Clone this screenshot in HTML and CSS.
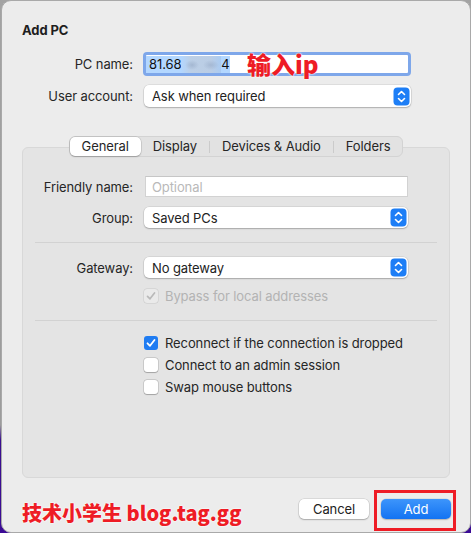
FILE: index.html
```html
<!DOCTYPE html>
<html>
<head>
<meta charset="utf-8">
<link rel="stylesheet" href="styles.css">
</head>
<body>
<div class="window">
  <div class="title">Add PC</div>
  <div class="form top">
    <label class="lbl">PC name:</label>
    <div class="field-wrap">
      <div class="input focus">
        <span class="sel">81.68<span class="blur"></span>4</span>
      </div>
      <span class="note-ip">输入ip</span>
    </div>
    <label class="lbl">User account:</label>
    <div class="popup">
      <span>Ask when required</span>
      <svg class="stepper" width="17" height="19" viewBox="0 0 17 19"><rect x="0.5" y="0.5" width="16" height="18" rx="4" fill="#1d7ef6"/><path d="M5.5 7.5 L8.5 4.5 L11.5 7.5 M5.5 11.5 L8.5 14.5 L11.5 11.5" fill="none" stroke="#fff" stroke-width="1.6" stroke-linecap="round" stroke-linejoin="round"/></svg>
    </div>
  </div>

  <div class="tabs-row">
    <div class="tabs">
      <div class="tab active">General</div>
      <div class="tab">Display</div>
      <div class="sep"></div>
      <div class="tab">Devices &amp; Audio</div>
      <div class="sep"></div>
      <div class="tab">Folders</div>
    </div>
  </div>

  <div class="panel">
    <div class="form inner">
      <label class="lbl">Friendly name:</label>
      <div class="input plain"><span class="ph">Optional</span></div>
      <label class="lbl">Group:</label>
      <div class="popup">
        <span>Saved PCs</span>
        <svg class="stepper" width="17" height="19" viewBox="0 0 17 19"><rect x="0.5" y="0.5" width="16" height="18" rx="4" fill="#1d7ef6"/><path d="M5.5 7.5 L8.5 4.5 L11.5 7.5 M5.5 11.5 L8.5 14.5 L11.5 11.5" fill="none" stroke="#fff" stroke-width="1.6" stroke-linecap="round" stroke-linejoin="round"/></svg>
      </div>
    </div>
    <div class="divider d1"></div>
    <div class="form inner g2">
      <label class="lbl">Gateway:</label>
      <div class="popup">
        <span>No gateway</span>
        <svg class="stepper" width="17" height="19" viewBox="0 0 17 19"><rect x="0.5" y="0.5" width="16" height="18" rx="4" fill="#1d7ef6"/><path d="M5.5 7.5 L8.5 4.5 L11.5 7.5 M5.5 11.5 L8.5 14.5 L11.5 11.5" fill="none" stroke="#fff" stroke-width="1.6" stroke-linecap="round" stroke-linejoin="round"/></svg>
      </div>
      <div></div>
      <div class="check disabled">
        <span class="box"><svg width="14" height="14" viewBox="0 0 14 14"><path d="M3.5 7.3 L6 9.8 L10.5 4" fill="none" stroke="#b9b9b9" stroke-width="1.7" stroke-linecap="round" stroke-linejoin="round"/></svg></span>
        <span>Bypass for local addresses</span>
      </div>
    </div>
    <div class="divider d2"></div>
    <div class="form inner g3">
      <div></div>
      <div class="checks">
        <div class="check">
          <span class="box on"><svg width="14" height="14" viewBox="0 0 14 14"><path d="M3.5 7.3 L6 9.8 L10.5 4" fill="none" stroke="#fff" stroke-width="1.8" stroke-linecap="round" stroke-linejoin="round"/></svg></span>
          <span>Reconnect if the connection is dropped</span>
        </div>
        <div class="check">
          <span class="box"></span>
          <span>Connect to an admin session</span>
        </div>
        <div class="check">
          <span class="box"></span>
          <span>Swap mouse buttons</span>
        </div>
      </div>
    </div>
  </div>

  <div class="footer">
    <div class="note-blog">技术小学生 blog.tag.gg</div>
    <div class="buttons">
      <button class="btn">Cancel</button>
      <button class="btn primary">Add</button>
    </div>
  </div>
</div>
</body>
</html>
```
FILE: styles.css
```css
* { box-sizing: border-box; }
html, body { margin: 0; padding: 0; }
body {
  width: 471px;
  height: 533px;
  overflow: hidden;
  background: linear-gradient(to bottom, #a3a3a3 0, #9c9c9c 425px, #3a0f8f 440px, #3b0b95 533px);
  font-family: "Inter", "Liberation Sans", sans-serif;
  font-size: 13px;
  letter-spacing: -0.1px;
  color: #262626;
}
.window {
  margin-left: 1px;
  width: 470px;
  height: 533px;
  background: #ececec;
  border: 1px solid #a9a9a9;
  border-radius: 10px;
  padding: 0 20px;
}
.title {
  margin-top: 21px;
  font-weight: 700;
  line-height: 16px;
  color: #1e1e1e;
}
.form {
  display: grid;
  grid-template-columns: 111px 1fr;
  column-gap: 10px;
  align-items: center;
}
.form.top {
  margin-top: 14px;
  margin-right: 39px;
  row-gap: 9px;
}
.lbl {
  text-align: right;
  white-space: nowrap;
  line-height: 16px;
}
.field-wrap { position: relative; }
.input {
  height: 24px;
  background: #fff;
  display: flex;
  align-items: center;
}
.input.focus {
  border: 3px solid #7ea7ea;
  border-radius: 4px;
  padding-left: 0;
}
.sel {
  background: #b3d7ff;
  color: #111;
  line-height: 17px;
  display: inline-flex;
  align-items: center;
  padding-left: 3px;
}
.blur {
  display: inline-block;
  width: 40px;
  height: 17px;
  background:
    radial-gradient(ellipse 7px 5px at 11px 9px, rgba(140,160,190,0.5), rgba(140,160,190,0) 100%),
    radial-gradient(ellipse 8px 5px at 30px 9px, rgba(140,160,190,0.45), rgba(140,160,190,0) 100%),
    linear-gradient(to right, #b3d7ff, #bccfe6 25%, #bacde5 75%, #aacbf2);
}
.note-ip {
  position: absolute;
  left: 104px;
  top: -1px;
  font-family: "Noto Sans CJK SC", "Liberation Sans", sans-serif;
  font-weight: 900;
  font-size: 24px;
  line-height: 26px;
  letter-spacing: 0;
  color: #ee1c25;
  text-shadow: 0 0 2px #fff, 0 0 2px #fff;
}
.popup {
  height: 22px;
  background: #fff;
  border-radius: 5px;
  box-shadow: 0 0 0 0.5px rgba(0,0,0,0.12), 0 1px 1.5px rgba(0,0,0,0.22);
  display: flex;
  align-items: center;
  justify-content: space-between;
  padding: 0 1px 0 8px;
  margin-left: 1px;
  color: #222;
}
.stepper { display: block; }
.tabs-row {
  display: flex;
  justify-content: center;
  margin-top: 29px;
  margin-bottom: -10px;
  position: relative;
  z-index: 1;
}
.tabs {
  display: flex;
  align-items: center;
  height: 21px;
  background: #e2e2e2;
  border: 1px solid #d3d3d3;
  border-radius: 6px;
}
.tab {
  height: 19px;
  line-height: 19px;
  padding: 0 12px;
  color: #262626;
}
.tab.active {
  background: #fff;
  border-radius: 5px;
  box-shadow: 0 0 0 0.5px rgba(0,0,0,0.15), 0 1px 1.5px rgba(0,0,0,0.2);
}
.sep {
  width: 1px;
  height: 12px;
  background: #cbcbcb;
}
.panel {
  height: 331px;
  background: #e4e4e4;
  border: 1px solid #d8d8d8;
  border-radius: 6px;
  padding: 28px 41px 0 0;
}
.form.inner {
  grid-template-columns: 110px 1fr;
  column-gap: 12px;
  row-gap: 10px;
}
.form.inner .popup { height: 21px; margin-left: -1px; }
.input.plain {
  height: 21px;
  border: 1px solid #d2d2d2;
  border-top-color: #c6c6c6;
  padding-left: 6px;
}
.ph { color: #b9b9b9; }
.divider {
  height: 1px;
  background: #d2d2d2;
  margin: 14px -29px 0 12px;
}
.d2 { margin-top: 13px; }
.form.g2 { margin-top: 14px; row-gap: 7px; }
.form.g3 { margin-top: 11px; }
.check {
  display: flex;
  align-items: center;
  gap: 7px;
  height: 22px;
  white-space: nowrap;
  color: #262626;
  margin-left: -1px;
}
.check.disabled { color: #b3b3b3; }
.box {
  width: 14px;
  height: 14px;
  border-radius: 3px;
  background: #fff;
  box-shadow: 0 0 0 0.5px rgba(0,0,0,0.2), 0 0.5px 1px rgba(0,0,0,0.2);
  display: flex;
  flex: none;
}
.check.disabled .box { background: #eaeaea; box-shadow: 0 0 0 0.5px rgba(0,0,0,0.12); }
.box.on { background: #1f7cf2; box-shadow: none; }
.checks { display: flex; flex-direction: column; }
.footer {
  display: flex;
  justify-content: space-between;
  align-items: flex-start;
  margin-top: 12px;
  margin-right: -1px;
}
.note-blog {
  margin-top: 10px;
  font-family: "Noto Sans CJK SC", "Liberation Sans", sans-serif;
  font-weight: 900;
  font-size: 20px;
  line-height: 26px;
  letter-spacing: 0;
  color: #ee1c25;
  text-shadow: 0 0 2px #fff, 0 0 2px #fff;
  white-space: nowrap;
}
.buttons {
  display: flex;
  gap: 12px;
  margin-top: 9px;
}
.btn {
  width: 70px;
  height: 20px;
  border: none;
  border-radius: 5px;
  font-family: inherit;
  font-size: 13px;
  letter-spacing: -0.1px;
  padding: 0;
  background: #fff;
  color: #222;
  box-shadow: 0 0 0 0.5px rgba(0,0,0,0.15), 0 1px 1.5px rgba(0,0,0,0.22);
}
.btn.primary {
  position: relative;
  background: linear-gradient(to bottom, #3d95fb, #1373f2);
  color: #fff;
  box-shadow: 0 0 0 0.5px rgba(0,0,0,0.1), 0 1px 1.5px rgba(0,0,0,0.2);
}
.btn.primary::after {
  content: "";
  position: absolute;
  left: -7px;
  top: -9px;
  right: -5px;
  bottom: -12px;
  border: 3px solid #ee1c25;
}
```
